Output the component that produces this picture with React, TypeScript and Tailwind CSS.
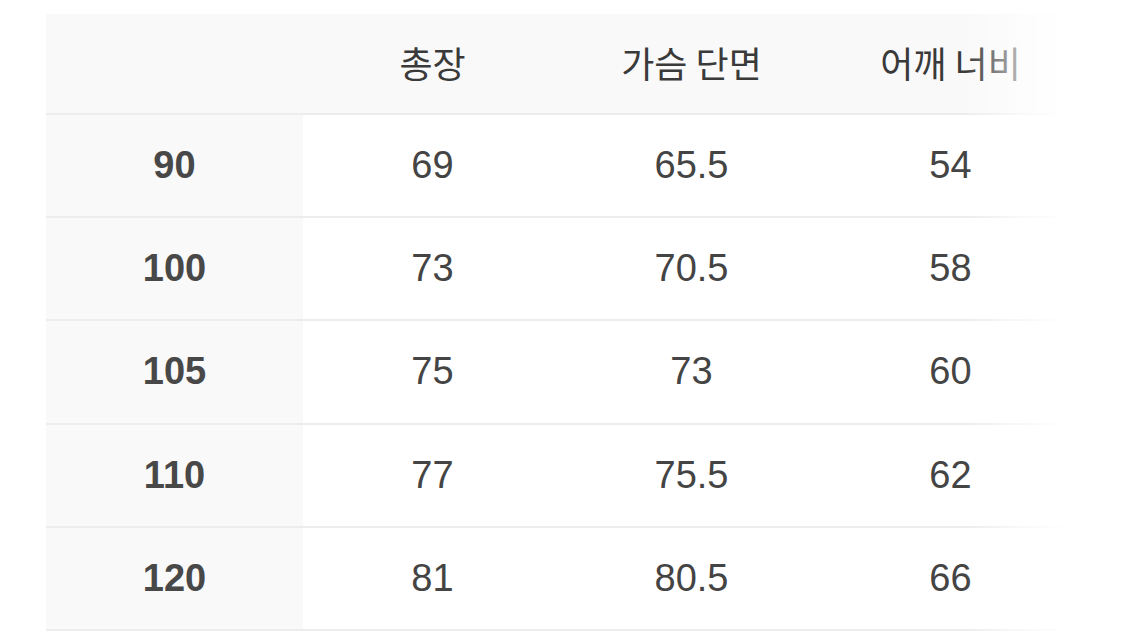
const headers = ['총장', '가슴 단면', '어깨 너비'];

const rows = [
  { size: '90', values: ['69', '65.5', '54'] },
  { size: '100', values: ['73', '70.5', '58'] },
  { size: '105', values: ['75', '73', '60'] },
  { size: '110', values: ['77', '75.5', '62'] },
  { size: '120', values: ['81', '80.5', '66'] },
];

export default function App() {
  return (
    <div
      className="min-h-[643px] w-[1125px] bg-white pl-[46px] pt-[14px]"
      style={{ fontFamily: '"Liberation Sans", "Noto Sans CJK KR", sans-serif' }}
    >
      <div className="relative w-[1020px] overflow-hidden">
        <div className="w-[1080px]">
          {/* header */}
          <div className="flex h-[101px] border-b-2 border-[#ededed] bg-[#f9f9f9]">
            <div className="w-[257px] shrink-0" />
            {headers.map((h) => (
              <div
                key={h}
                className="flex w-[259px] shrink-0 items-center justify-center pb-[4px] text-[36px] text-[#3a3a3a]"
                style={{ fontFamily: '"Noto Sans CJK KR", sans-serif' }}
              >
                {h}
              </div>
            ))}
          </div>

          {rows.map((r) => (
            <div key={r.size} className="flex h-[103.2px] border-b-2 border-[#ededed]">
              <div className="flex w-[257px] shrink-0 items-center justify-center bg-[#f9f9f9] text-[38px] font-bold text-[#484848]">
                {r.size}
              </div>
              {r.values.map((v, i) => (
                <div
                  key={i}
                  className="flex w-[259px] shrink-0 items-center justify-center text-[38px] text-[#444]"
                >
                  {v}
                </div>
              ))}
            </div>
          ))}
        </div>

        {/* scroll fade on the right edge */}
        <div className="pointer-events-none absolute inset-y-0 right-0 w-[100px] bg-gradient-to-r from-white/0 via-white/60 to-white" />
      </div>
    </div>
  );
}
